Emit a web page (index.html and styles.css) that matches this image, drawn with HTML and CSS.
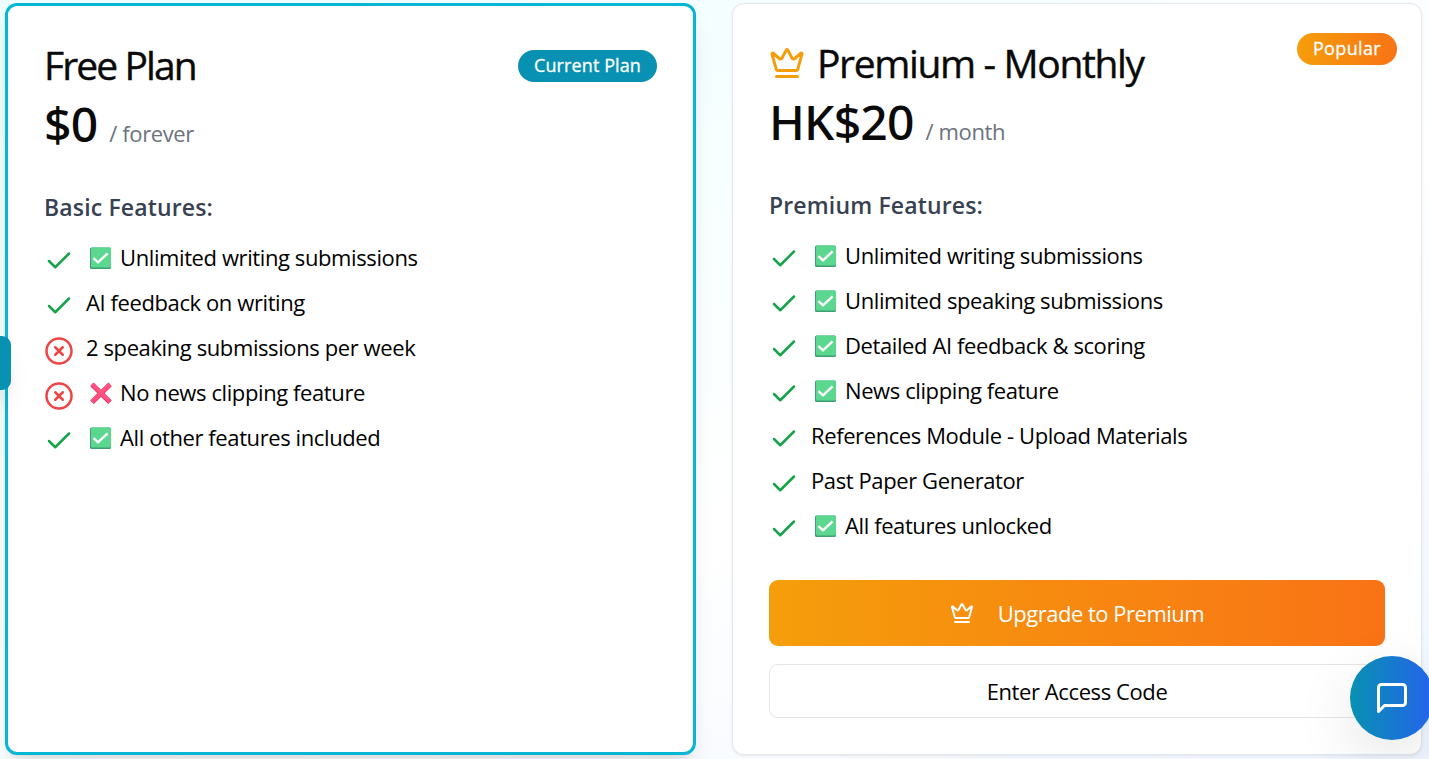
FILE: index.html
```html
<!DOCTYPE html>
<html lang="en">
<head>
	<meta charset="UTF-8">
	<title>Plans</title>
	<link rel="stylesheet" href="styles.css">
</head>
<body>
	<svg class="defs">
		<symbol id="check" viewBox="0 0 24 24"><path d="M20 6 9 17l-5-5"/></symbol>
		<symbol id="cross" viewBox="0 0 24 24"><circle cx="12" cy="12" r="10"/><path d="m15 9-6 6M9 9l6 6"/></symbol>
		<symbol id="crown" viewBox="0 0 24 24"><path d="M11.562 3.266a.5.5 0 0 1 .876 0L15.39 8.87a1 1 0 0 0 1.516.294L21.183 5.5a.5.5 0 0 1 .798.519l-2.834 10.246a1 1 0 0 1-.956.734H5.81a1 1 0 0 1-.957-.734L2.02 6.02a.5.5 0 0 1 .798-.519l4.276 3.664a1 1 0 0 0 1.516-.294zM5 21h14"/></symbol>
		<symbol id="box" viewBox="0 0 22 22">
			<rect width="21" height="21.5" y=".5" rx="1.5" fill="#3f9f72"/>
			<rect x="1" y=".5" width="20" height="20" rx="1.5" fill="#5bd78f"/>
			<path d="M3.5 11.2 8 15.4 17.6 6.4" fill="none" stroke="#fff" stroke-width="2.4"/>
		</symbol>
		<symbol id="redx" viewBox="0 0 22 22">
			<path d="M2 2.5 20 20.3M20 2.5 2 20.3" fill="none" stroke="#d93a68" stroke-width="5"/>
			<path d="M2 2 20 19.5M20 2 2 19.5" fill="none" stroke="#ff5082" stroke-width="4"/>
		</symbol>
	</svg>
	<main class="plans">
		<section class="card current">
			<div class="head">
				<h2><span>Free Plan</span></h2>
				<span class="badge">Current Plan</span>
			</div>
			<div class="price"><b>$0</b><span>/ forever</span></div>
			<h3>Basic Features:</h3>
			<ul>
				<li><svg class="yes"><use href="#check"/></svg><svg class="emoji"><use href="#box"/></svg><span>Unlimited writing submissions</span></li>
				<li><svg class="yes"><use href="#check"/></svg><span>AI feedback on writing</span></li>
				<li><svg class="no"><use href="#cross"/></svg><span>2 speaking submissions per week</span></li>
				<li><svg class="no"><use href="#cross"/></svg><svg class="emoji"><use href="#redx"/></svg><span>No news clipping feature</span></li>
				<li><svg class="yes"><use href="#check"/></svg><svg class="emoji"><use href="#box"/></svg><span>All other features included</span></li>
			</ul>
		</section>
		<section class="card premium">
			<span class="badge popular">Popular</span>
			<div class="head">
				<h2><svg class="crown"><use href="#crown"/></svg><span>Premium - Monthly</span></h2>
			</div>
			<div class="price"><b>HK$20</b><span>/ month</span></div>
			<h3>Premium Features:</h3>
			<ul>
				<li><svg class="yes"><use href="#check"/></svg><svg class="emoji"><use href="#box"/></svg><span>Unlimited writing submissions</span></li>
				<li><svg class="yes"><use href="#check"/></svg><svg class="emoji"><use href="#box"/></svg><span>Unlimited speaking submissions</span></li>
				<li><svg class="yes"><use href="#check"/></svg><svg class="emoji"><use href="#box"/></svg><span>Detailed AI feedback &amp; scoring</span></li>
				<li><svg class="yes"><use href="#check"/></svg><svg class="emoji"><use href="#box"/></svg><span>News clipping feature</span></li>
				<li><svg class="yes"><use href="#check"/></svg><span>References Module - Upload Materials</span></li>
				<li><svg class="yes"><use href="#check"/></svg><span>Past Paper Generator</span></li>
				<li><svg class="yes"><use href="#check"/></svg><svg class="emoji"><use href="#box"/></svg><span>All features unlocked</span></li>
			</ul>
			<button class="upgrade"><svg><use href="#crown"/></svg><span>Upgrade to Premium</span></button>
			<button class="code">Enter Access Code</button>
		</section>
	</main>
	<div class="tab"></div>
	<div class="chat">
		<svg viewBox="0 0 24 24"><path d="M21 15a2 2 0 0 1-2 2H7l-4 4V5a2 2 0 0 1 2-2h14a2 2 0 0 1 2 2z"/></svg>
	</div>
</body>
</html>
```
FILE: styles.css
```css
* {
	box-sizing: border-box;
}
body {
	margin: 0;
	height: 759px;
	overflow: hidden;
	background: linear-gradient(to bottom right, #ecfeff 0%, #ffffff 60%, #eff6ff 100%);
	font-family: "Open Sans", "Noto Sans", sans-serif;
	font-size: 22px;
	color: #0a0a0a;
}
h2, h3, ul {
	margin: 0;
	padding: 0;
	font-weight: 400;
}
svg {
	flex: none;
	fill: none;
	stroke: currentColor;
	stroke-width: 2;
	stroke-linecap: round;
	stroke-linejoin: round;
}
.defs {
	display: none;
}
.plans {
	display: grid;
	grid-template-columns: 691px 690px;
	gap: 36px;
	padding: 3px 0 0 5px;
}
.card {
	height: 752px;
	padding: 36px;
	border: 1px solid #e5e7eb;
	border-radius: 12px;
	background: #fff;
	box-shadow: 0 1px 3px rgba(0,0,0,.08);
}
.current {
	border: 3px solid #06b6d4;
	box-shadow: 0 15px 22px -4px rgba(0,0,0,.1), 0 6px 9px -6px rgba(0,0,0,.1);
}
.premium {
	position: relative;
}
.head {
	display: flex;
	justify-content: space-between;
	align-items: center;
	height: 48px;
}
h2 {
	display: flex;
	align-items: center;
	gap: 12px;
	height: 46px;
	margin-bottom: 2px;
	font-size: 39px;
	line-height: 44px;
	letter-spacing: -1.35px;
	-webkit-text-stroke: .4px;
}
.current h2 {
	letter-spacing: -1.9px;
}
.crown {
	width: 36px;
	height: 36px;
	color: #f59e0b;
}
.badge {
	height: 32px;
	padding: 0 16px;
	border-radius: 16px;
	background: #0891b2;
	color: #fff;
	font-size: 18px;
	line-height: 31px;
	letter-spacing: .1px;
	-webkit-text-stroke: .3px;
}
.popular {
	position: absolute;
	top: 29px;
	right: 24px;
	background: linear-gradient(to right, #f59e0b, #f97316);
	letter-spacing: .35px;
}
.price {
	display: flex;
	align-items: baseline;
	gap: 12px;
	height: 72px;
	line-height: 68px;
}
.price b {
	font-family: "Noto Sans", sans-serif;
	font-size: 48px;
	font-weight: 500;
	letter-spacing: -.8px;
}
.price span {
	color: #6b7280;
	letter-spacing: -.4px;
}
h3 {
	margin-top: 27px;
	font-size: 23px;
	font-weight: 600;
	line-height: 36px;
	letter-spacing: .15px;
	color: #374151;
}
ul {
	margin-top: 16px;
	list-style: none;
}
li {
	display: flex;
	height: 33px;
	margin-bottom: 12px;
	line-height: 33px;
	letter-spacing: -.4px;
	color: #000;
}
li svg {
	width: 30px;
	height: 30px;
	margin: 5px 12px 0 0;
}
li .emoji {
	width: 22px;
	height: 22px;
	margin: 6px 8px 0 4px;
	stroke-linecap: butt;
	stroke: none;
}
.yes {
	color: #16a34a;
}
.no {
	color: #ef4444;
}
button {
	display: flex;
	align-items: center;
	justify-content: center;
	width: 616px;
	border-radius: 9px;
	font: inherit;
	letter-spacing: -.4px;
}
.upgrade {
	gap: 24px;
	height: 66px;
	margin-top: 38px;
	border: 0;
	background: linear-gradient(to right, #f59e0b, #f97316);
	color: #fff;
	letter-spacing: -.5px;
}
.upgrade svg {
	width: 24px;
	height: 24px;
}
.code {
	height: 54px;
	margin-top: 18px;
	border: 1px solid #e5e5e5;
	background: #fff;
	color: #000;
}
.tab {
	position: absolute;
	left: -20px;
	top: 336px;
	width: 31px;
	height: 54px;
	border-radius: 9px;
	background: #0891b2;
	box-shadow: 0 15px 22px -4px rgba(0,0,0,.1);
}
.chat {
	display: flex;
	align-items: center;
	justify-content: center;
	position: absolute;
	left: 1350px;
	top: 656px;
	width: 84px;
	height: 84px;
	border-radius: 50%;
	background: linear-gradient(to right, #0891b2, #2563eb);
	box-shadow: 0 20px 60px rgba(0,0,0,.1);
	color: #fff;
}
.chat svg {
	width: 36px;
	height: 36px;
}
```
